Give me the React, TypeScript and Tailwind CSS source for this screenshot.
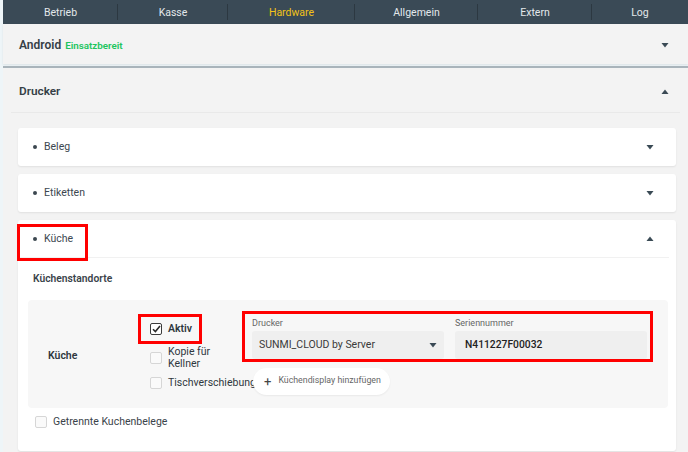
import { FC } from "react";

const tabs = [
  { label: "Betrieb", w: "w-[115px]" },
  { label: "Kasse", w: "w-[110px]" },
  { label: "Hardware", w: "w-[127px]", active: true },
  { label: "Allgemein", w: "w-[123px]" },
  { label: "Extern", w: "w-[114px]" },
  { label: "Log", w: "w-[96px]", last: true },
];

const Down: FC = () => (
  <svg width="8" height="6" viewBox="0 0 8 6" className="shrink-0">
    <path d="M0.5 1 L7.5 1 L4 5.5 Z" fill="#3a4a55" />
  </svg>
);

const Up: FC = () => (
  <svg width="8" height="6" viewBox="0 0 8 6" className="shrink-0">
    <path d="M0.5 5 L7.5 5 L4 0.5 Z" fill="#3a4a55" />
  </svg>
);

const Box: FC<{ checked?: boolean }> = ({ checked }) =>
  checked ? (
    <span className="flex h-[12px] w-[12px] shrink-0 items-center justify-center rounded-[2px] border border-[#3b3b3b] bg-white">
      <svg width="9" height="8" viewBox="0 0 9 8">
        <path d="M1 4.2 L3.4 6.6 L8 1" stroke="#2b2b2b" strokeWidth="1.6" fill="none" />
      </svg>
    </span>
  ) : (
    <span className="h-[12px] w-[12px] shrink-0 rounded-[2px] border border-[#d6d6d6] bg-[#fafafa]" />
  );

const SubCard: FC<{ label: string }> = ({ label }) => (
  <div className="flex h-[38px] items-center justify-between rounded-[3px] bg-white pl-[15px] pr-[22px] shadow-[0_1px_2px_rgba(0,0,0,0.08)]">
    <div className="flex items-center gap-[7px] text-[10.5px] text-[#3c4750]">
      <span className="h-[4px] w-[4px] rounded-full bg-[#3c4750]" />
      {label}
    </div>
    <Down />
  </div>
);

const App: FC = () => {
  return (
    <div className="h-[452px] w-[688px] overflow-hidden bg-[#eef5f8] pl-[3px] font-['Roboto',sans-serif] text-[#37434b]">
      {/* Top tabs */}
      <nav className="flex h-[24px] bg-[#3a4a56]">
        {tabs.map((t) => (
          <div
            key={t.label}
            className={`flex items-center justify-center ${t.w} relative pt-px text-[10.5px] ${
              t.active ? "text-[#f2c318]" : "text-[#e3e8eb]"
            }`}
          >
            {t.label}
            {!t.last && <span className="absolute right-0 top-[4px] h-[16px] w-px bg-[#2c3841]" />}
          </div>
        ))}
      </nav>

      {/* Android */}
      <div className="flex h-[40px] items-center justify-between bg-[#f3f3f3] pl-[16px] pr-[19px] pt-px shadow-[0_1px_2px_rgba(0,0,0,0.08)]">
        <div className="flex items-baseline gap-[4px]">
          <span className="text-[12px] font-semibold text-[#353f46]">Android</span>
          <span className="text-[9.8px] font-semibold text-[#22c55e]">Einsatzbereit</span>
        </div>
        <Down />
      </div>

      {/* Drucker */}
      <div className="mt-[2px] h-full border-t-2 border-[#a9b4bb] bg-[#f3f3f3]">
        <div className="mx-[8px] flex h-[45px] items-center justify-between border-b border-[#e9e9e9] pl-[8px] pr-[11px] pt-[3px]">
          <span className="text-[11.8px] font-semibold text-[#353f46]">Drucker</span>
          <Up />
        </div>

        <div className="flex flex-col gap-[8px] pl-[15px] pr-[12px] pt-[15px]">
          <SubCard label="Beleg" />
          <SubCard label="Etiketten" />

          {/* Küche */}
          <div className="rounded-[3px] bg-white pb-[15px] shadow-[0_1px_2px_rgba(0,0,0,0.08)]">
            <div className="relative mr-[7px] flex h-[38px] items-center justify-between border-b border-[#f1f1f1] pl-[15px] pr-[15px]">
              <div className="flex items-center gap-[7px] text-[10.5px] text-[#3c4750]">
                <span className="h-[4px] w-[4px] rounded-full bg-[#3c4750]" />
                Küche
              </div>
              <Up />
              {/* red annotation frame */}
              <span className="absolute -left-px top-[4px] h-[37px] w-[71px] border-[3px] border-[#ff0000]" />
            </div>

            <div className="pl-[10px] pr-[8px]">
              <div className="flex h-[42px] items-center pl-[5px] text-[10.3px] font-semibold text-[#3a434a]">
                Küchenstandorte
              </div>

              <div className="flex h-[108px] items-center rounded-[4px] bg-[#f7f7f7]">
                <div className="w-[122px] pl-[20px] pt-[3px] text-[10.5px] font-semibold text-[#2f383e]">Küche</div>

                <div className="mb-[4px] flex w-[92px] flex-col text-[10.5px] text-[#2f383e]">
                  <div className="-ml-[12px] flex h-[30px] w-[64px] items-center gap-[6px] border-[3px] border-[#ff0000] pl-[9px]">
                    <Box checked />
                    <span className="font-semibold">Aktiv</span>
                  </div>
                  <div className="mt-[2px] flex items-center gap-[6px]">
                    <Box />
                    <span className="leading-[12px]">
                      Kopie für
                      <br />
                      Kellner
                    </span>
                  </div>
                  <div className="mt-[5px] flex items-center gap-[6px] whitespace-nowrap">
                    <Box />
                    <span>Tischverschiebung</span>
                  </div>
                </div>

                <div className="mb-[3px] flex flex-col">
                  <div className="flex h-[51px] w-[411px] gap-[11px] border-[3px] border-[#ff0000] pl-[7px] pr-[3px] pt-[4px]">
                    <div className="flex flex-1 flex-col">
                      <span className="h-[11px] text-[9px] leading-[11px] text-[#666]">Drucker</span>
                      <div className="mt-[2px] flex h-[28px] items-center justify-between rounded-[3px] bg-[#efefef] pl-[7px] pr-[7px] text-[10.5px] text-[#3a3a3a]">
                        SUNMI_CLOUD by Server
                        <Down />
                      </div>
                    </div>
                    <div className="flex flex-1 flex-col">
                      <span className="h-[11px] text-[9px] leading-[11px] text-[#666]">Seriennummer</span>
                      <div className="mt-[2px] flex h-[28px] items-center rounded-[3px] bg-[#efefef] pl-[10px] text-[10.3px] font-medium text-[#222]">
                        N411227F00032
                      </div>
                    </div>
                  </div>
                  <div className="relative z-10 ml-[11px] mt-[6px] flex h-[27px] w-[137px] items-center gap-[7px] rounded-full bg-white pl-[11px] text-[8.8px] text-[#666] shadow-[0_1px_2px_rgba(0,0,0,0.06)]">
                    <span className="text-[13px] leading-none text-[#444]">+</span>
                    Küchendisplay hinzufügen
                  </div>
                </div>
              </div>

              <div className="flex h-[28px] items-center gap-[6px] pl-[7px] text-[10.5px] text-[#3a434a]">
                <Box />
                Getrennte Kuchenbelege
              </div>
            </div>
          </div>
        </div>
      </div>
    </div>
  );
};

export default App;
